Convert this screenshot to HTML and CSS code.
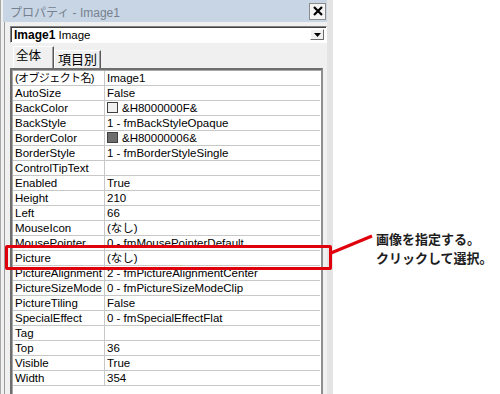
FILE: index.html
```html
<!DOCTYPE html>
<html lang="ja">
<head>
    <meta charset="UTF-8">
    <title>プロパティ - Image1</title>
    <link rel="stylesheet" href="styles.css">
</head>
<body>
    <div class="page">
        <div class="window">
            <div class="titlebar">
                <span class="title">プロパティ - Image1</span>
                <span class="close">
                    <svg width="10" height="10" viewBox="0 0 10 10"><path d="M1 1 L9 9 M9 1 L1 9" stroke="#000" stroke-width="2.2"/></svg>
                </span>
            </div>
            <div class="combo">
                <span class="combo-text"><b>Image1</b> Image</span>
                <span class="combo-btn">
                    <svg width="7" height="4" viewBox="0 0 7 4"><path d="M0 0 H7 L3.5 4 Z" fill="#000"/></svg>
                </span>
            </div>
            <div class="tabs">
                <span class="tab active">全体</span>
                <span class="tab">項目別</span>
            </div>
            <div class="grid">
                <table class="props">
                    <tr><td class="jp">(オブジェクト名)</td><td>Image1</td></tr>
                    <tr><td>AutoSize</td><td>False</td></tr>
                    <tr><td>BackColor</td><td><span class="swatch light"></span>&amp;H8000000F&amp;</td></tr>
                    <tr><td>BackStyle</td><td>1 - fmBackStyleOpaque</td></tr>
                    <tr><td>BorderColor</td><td><span class="swatch dark"></span>&amp;H80000006&amp;</td></tr>
                    <tr><td>BorderStyle</td><td>1 - fmBorderStyleSingle</td></tr>
                    <tr><td>ControlTipText</td><td></td></tr>
                    <tr><td>Enabled</td><td>True</td></tr>
                    <tr><td>Height</td><td>210</td></tr>
                    <tr><td>Left</td><td>66</td></tr>
                    <tr><td>MouseIcon</td><td>(なし)</td></tr>
                    <tr><td>MousePointer</td><td>0 - fmMousePointerDefault</td></tr>
                    <tr><td>Picture</td><td>(なし)</td></tr>
                    <tr><td>PictureAlignment</td><td>2 - fmPictureAlignmentCenter</td></tr>
                    <tr><td>PictureSizeMode</td><td>0 - fmPictureSizeModeClip</td></tr>
                    <tr><td>PictureTiling</td><td>False</td></tr>
                    <tr><td>SpecialEffect</td><td>0 - fmSpecialEffectFlat</td></tr>
                    <tr><td>Tag</td><td></td></tr>
                    <tr><td>Top</td><td>36</td></tr>
                    <tr><td>Visible</td><td>True</td></tr>
                    <tr><td>Width</td><td>354</td></tr>
                </table>
            </div>
        </div>
        <div class="note">
            <div class="note-line">画像を指定する。</div>
            <div class="note-line">クリックして選択。</div>
        </div>
    </div>

    <!-- 注釈: 赤枠と引き出し線 -->
    <div class="highlight"></div>
    <svg class="callout" width="50" height="26" viewBox="0 0 50 26">
        <path d="M1 20 L42 3" stroke="#e0000b" stroke-width="3" fill="none"/>
    </svg>
</body>
</html>
```

FILE: styles.css
```css
body {
    margin: 0;
    background-color: #fff;
    font-family: "Liberation Sans", "Noto Sans CJK JP", sans-serif;
    color: #000;
}

.page {
    display: flex;
    align-items: flex-start;
    height: 394px;
    overflow: hidden;
}

.window {
    width: 324px;
    height: 394px;
    background-color: #f0f0f0;
    border-left: 1px solid #a8a8a8;
    border-right: 6px solid #e4e4e4;
    box-shadow: inset 3px 0 0 #f0f0f0, inset 4px 0 0 #9a9a9a;
    padding-left: 2px;
    overflow: hidden;
}

.titlebar {
    display: flex;
    align-items: center;
    justify-content: space-between;
    height: 22px;
    background-color: #c8d5e4;
    padding: 0 0 0 7px;
}

.title {
    font-size: 12px;
    color: #75818f;
}

.close {
    display: flex;
    align-items: center;
    justify-content: center;
    width: 15px;
    height: 15px;
    margin-right: 1px;
    background-color: #f4f4f4;
    border: 1px solid #8c8c8c;
}

.combo {
    display: flex;
    align-items: center;
    justify-content: space-between;
    height: 15px;
    margin: 4px 0 0 7px;
    background-color: #fff;
    border: 1px solid #fff;
    border-top-color: #808080;
    border-left-color: #808080;
    box-shadow: inset 1px 1px 0 #404040;
    padding: 0 2px 0 3px;
    font-size: 12px;
}

.combo-text {
    font-size: 11.5px;
}

.combo-text b {
    font-size: 12px;
}

.combo-btn {
    display: flex;
    align-items: flex-end;
    justify-content: center;
    width: 14px;
    height: 11px;
    box-sizing: border-box;
    padding-bottom: 2px;
    background-color: #f0f0f0;
    border: 1px solid #fff;
    border-right-color: #6a6a6a;
    border-bottom-color: #6a6a6a;
}

.tabs {
    display: flex;
    align-items: flex-end;
    height: 22px;
    margin: 3px 0 0 10px;
}

.tab {
    height: 17px;
    padding: 0 3px;
    font-size: 13px;
    line-height: 17px;
    border: 1px solid #fff;
    border-bottom: none;
    border-right-color: #5a5a5a;
    box-shadow: inset -1px 0 0 #a0a0a0;
}

.tab.active {
    height: 21px;
    line-height: 19px;
    padding: 0 12px 0 2px;
    font-size: 12.5px;
}

.grid {
    width: 308px;
    height: 340px;
    margin-left: 7px;
    background-color: #fff;
    border: 2px solid #fff;
    border-top-color: #6e6e6e;
    border-left-color: #6e6e6e;
    border-right-color: #8e8e8e;
    box-shadow: inset 1px 1px 0 #a8a8a8;
    padding: 1px 0 0 1px;
    overflow: hidden;
}

.props {
    width: 307px;
    border-collapse: separate;
    border-spacing: 0;
    font-size: 11.5px;
}

.props td {
    height: 14px;
    padding: 0 0 0 2px;
    line-height: 14px;
    white-space: nowrap;
    border-bottom: 1px solid #c8c8c8;
}

.props td:first-child {
    width: 89px;
    border-right: 1px solid #c8c8c8;
}

.props td.jp {
    font-size: 11px;
    letter-spacing: -0.6px;
}

.swatch {
    display: inline-block;
    width: 9px;
    height: 9px;
    margin: 0 4px -1px 0;
    border: 1px solid #404040;
}

.swatch.light {
    background-color: #f0f0f0;
}

.swatch.dark {
    background-color: #6d6d6d;
}

.note {
    margin-left: 43px;
    padding-top: 229px;
    font-family: "Noto Sans CJK JP", sans-serif;
    font-size: 13px;
    font-weight: bold;
    color: #1e1e1e;
    white-space: nowrap;
}

.note-line {
    line-height: 19px;
}

.highlight {
    position: absolute;
    left: 5px;
    top: 245px;
    width: 327px;
    height: 25px;
    box-sizing: border-box;
    border: 3px solid #e0000b;
    border-radius: 2px;
}

.callout {
    position: absolute;
    left: 330px;
    top: 233px;
}
```
